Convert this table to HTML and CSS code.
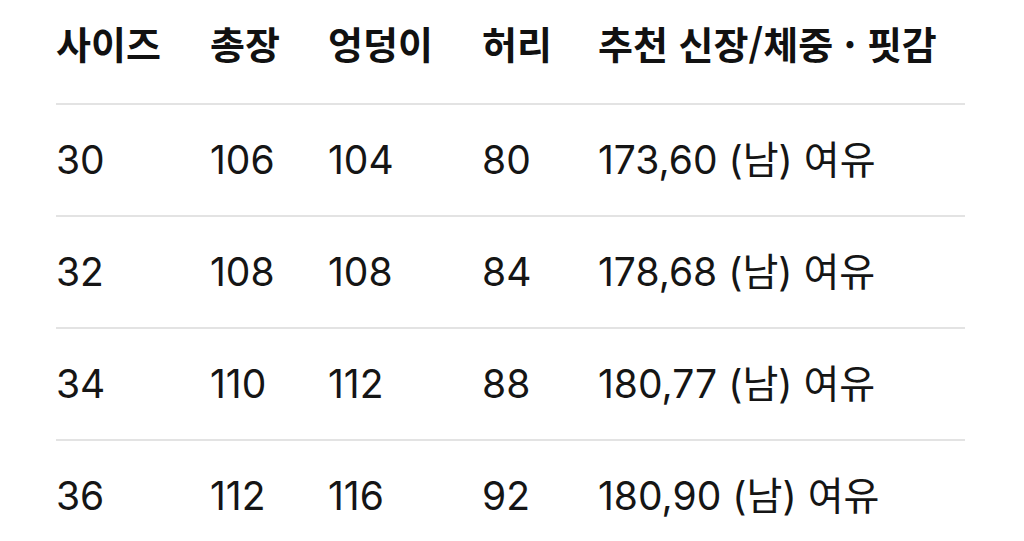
FILE: index.html
```html
<!DOCTYPE html>
<html lang="ko">
<head>
<meta charset="utf-8">
<link rel="stylesheet" href="styles.css">
</head>
<body>
<div class="table">
  <div class="row head">
    <div class="cell">사이즈</div>
    <div class="cell">총장</div>
    <div class="cell">엉덩이</div>
    <div class="cell">허리</div>
    <div class="cell">추천 신장/체중 · 핏감</div>
  </div>
  <div class="row">
    <div class="cell">30</div>
    <div class="cell">106</div>
    <div class="cell">104</div>
    <div class="cell">80</div>
    <div class="cell">173,60 (남) 여유</div>
  </div>
  <div class="row">
    <div class="cell">32</div>
    <div class="cell">108</div>
    <div class="cell">108</div>
    <div class="cell">84</div>
    <div class="cell">178,68 (남) 여유</div>
  </div>
  <div class="row">
    <div class="cell">34</div>
    <div class="cell">110</div>
    <div class="cell">112</div>
    <div class="cell">88</div>
    <div class="cell">180,77 (남) 여유</div>
  </div>
  <div class="row last">
    <div class="cell">36</div>
    <div class="cell">112</div>
    <div class="cell">116</div>
    <div class="cell">92</div>
    <div class="cell">180,90 (남) 여유</div>
  </div>
</div>
</body>
</html>
```

FILE: styles.css
```css
html, body {
  margin: 0;
  padding: 0;
  background: #ffffff;
}
body {
  font-family: Inter, "Noto Sans CJK KR", sans-serif;
  color: #151515;
  width: 1024px;
  height: 541px;
  overflow: hidden;
}
.table {
  margin-left: 56px;
  width: 909px;
}
.row {
  display: grid;
  grid-template-columns: 154px 118px 154px 116px 1fr;
  align-items: center;
  height: 110px;
  border-bottom: 2px solid #e3e3e3;
  font-size: 39px;
  font-weight: 400;
}
.row.head {
  height: 103px;
  font-family: "Noto Sans CJK KR", sans-serif;
  font-size: 38px;
  font-weight: 700;
  color: #111111;
  align-items: start;
}
.row.head .cell {
  padding-top: 20px;
}
.row.last {
  border-bottom: none;
}
.cell {
  white-space: nowrap;
  line-height: 1.2;
}
```
